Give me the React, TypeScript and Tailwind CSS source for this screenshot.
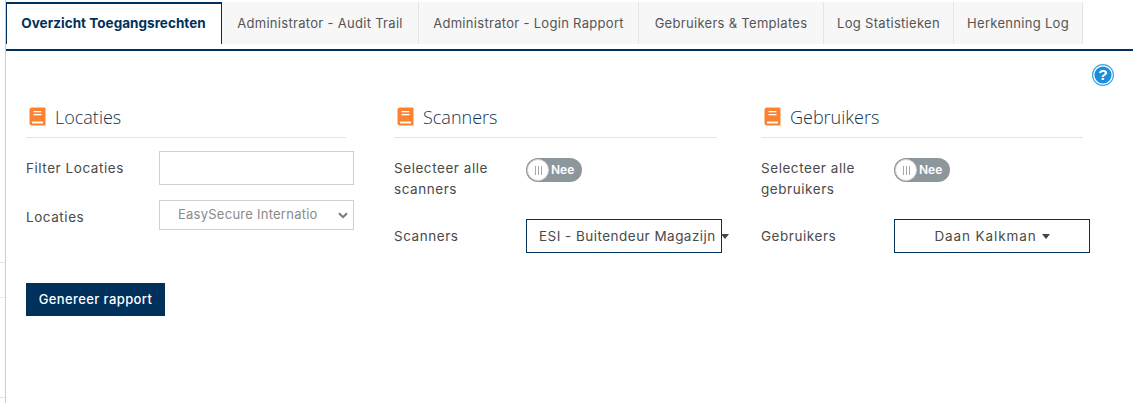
const poppinsLike = "font-['Inter','Liberation_Sans',sans-serif]";

function Book() {
  return (
    <svg width="17" height="19" viewBox="0 0 17 19" className="shrink-0">
      <path d="M3 0.5h12.5a1 1 0 0 1 1 1v17H3a2.5 2.5 0 0 1-2.5-2.5V3A2.5 2.5 0 0 1 3 .5z" fill="#fd8230" />
      <rect x="4.5" y="4" width="8" height="1.3" fill="#fff" />
      <rect x="4.5" y="7" width="8" height="1.3" fill="#fff" />
      <rect x="3" y="14.6" width="11" height="1.8" fill="#fff" />
    </svg>
  );
}

function Heading({ title, width }: { title: string; width: string }) {
  return (
    <div className={`flex h-[38px] items-start gap-[9px] border-b border-[#dee6ec] pl-[3px] pt-[7px] ${width}`}>
      <Book />
      <span className="font-['Open_Sans',sans-serif] text-[18px] font-light leading-[20px] text-[#16324f]">{title}</span>
    </div>
  );
}

function Toggle() {
  return (
    <div className="flex h-6 w-14 items-center rounded-full bg-[#8c969d] p-[1px]">
      <div className="flex h-[22px] w-[22px] items-center justify-center gap-[2px] rounded-full border border-[#d5d5d5] bg-white">
        <span className="h-[9px] w-[1px] bg-[#a8a8a8]" />
        <span className="h-[9px] w-[1px] bg-[#a8a8a8]" />
        <span className="h-[9px] w-[1px] bg-[#a8a8a8]" />
      </div>
      <span className="ml-[2px] text-[12px] font-semibold leading-none text-white">Nee</span>
    </div>
  );
}

function Caret() {
  return <span className="ml-[5px] inline-block h-0 w-0 shrink-0 border-x-[4.5px] border-t-[5px] border-x-transparent border-t-[#444]" />;
}

function Label({ children, className = "" }: { children: React.ReactNode; className?: string }) {
  return <div className={`shrink-0 text-[13.5px] leading-[21px] tracking-[0.55px] text-[#4a4a4a] ${className}`}>{children}</div>;
}

const tabs = [
  ["Administrator - Audit Trail", "w-[197px]"],
  ["Administrator - Login Rapport", "w-[220px]"],
  ["Gebruikers & Templates", "w-[185px]"],
  ["Log Statistieken", "w-[130px]"],
  ["Herkenning Log", "w-[129px]"],
];

export default function App() {
  return (
    <div className={`flex h-[403px] w-[1133px] overflow-hidden bg-white ${poppinsLike}`}>
      <div className="flex h-full w-[6px] shrink-0 flex-col border-r border-[#cfcfcf] pt-[262px]">
        <div className="h-px bg-[#e4e4e4]" />
        <div className="mt-[34px] h-px border-t border-dotted border-[#dddddd]" />
        <div className="mt-[99px] h-px bg-[#e4e4e4]" />
      </div>
      <div className="flex min-w-0 flex-1 flex-col">
        <div className="flex h-[51px] items-start border-b-2 border-[#00305c] pt-[2px]">
          <div className="flex h-[42px] w-[216px] items-center justify-center border-x border-t-2 border-[#00305c] bg-white pb-[1px] pr-[1px] text-[13.5px] font-bold tracking-[0.03px] text-[#00305c]">
            Overzicht Toegangsrechten
          </div>
          {tabs.map(([t, w]) => (
            <div key={t} className={`flex h-[42px] items-center justify-center border-r border-[#e5e5e5] bg-[#f7f7f7] pt-[1px] text-[13px] tracking-[0.3px] text-[#555] ${w}`}>
              {t}
            </div>
          ))}
        </div>
        <div className="relative flex-1">
          <svg width="24" height="24" viewBox="0 0 24 24" className="absolute left-[1085px] top-[12px]">
            <circle cx="12" cy="12" r="10.4" fill="#fff" stroke="#3ea6e6" strokeWidth="1.2" />
            <circle cx="12" cy="12" r="8.6" fill="#1b8ed8" />
            <text x="12" y="17.4" textAnchor="middle" fontSize="15.5" fontWeight="700" fill="#fff" fontFamily="Liberation Sans">?</text>
          </svg>
          <div className="grid grid-cols-[368px_367px_367px] pl-5 pt-[49px]">
            <section>
              <Heading title="Locaties" width="w-[320px]" />
              <div className="mt-[13px] flex items-center">
                <Label className="w-[133px] tracking-[0.35px]">Filter Locaties</Label>
                <div className="h-[34px] w-[195px] border border-[#d1d1d1] bg-white" />
              </div>
              <div className="mt-[15px] flex items-center">
                <Label className="w-[133px] pt-[4px]">Locaties</Label>
                <div className="flex h-[30px] w-[195px] items-center justify-between border border-[#d1d1d1] pl-[18px] pr-[5px] text-[13px] tracking-[0.25px] text-[#8a8a8a]">
                  <span className="whitespace-nowrap">EasySecure Internatio</span>
                  <svg width="10" height="7" viewBox="0 0 10 7"><path d="M1 1.2l4 4 4-4" fill="none" stroke="#777" strokeWidth="2" /></svg>
                </div>
              </div>
              <div className="mt-[53px] flex h-[33px] w-[139px] items-center justify-center bg-[#00305c] text-[13px] font-medium tracking-[0.4px] text-white">
                Genereer rapport
              </div>
            </section>
            <section>
              <Heading title="Scanners" width="w-[323px]" />
              <div className="mt-[20px] flex items-start">
                <Label className="h-[42px] w-[132px]">Selecteer alle scanners</Label>
                <Toggle />
              </div>
              <div className="mt-[19px] flex items-center">
                <Label className="w-[132px]">Scanners</Label>
                <div className="flex h-[34px] w-[196px] items-center whitespace-nowrap border border-[#00305c] pl-3 text-[13.5px] tracking-[0.47px] text-[#4a4a4a]">
                  ESI - Buitendeur Magazijn
                  <Caret />
                </div>
              </div>
            </section>
            <section>
              <Heading title="Gebruikers" width="w-[322px]" />
              <div className="mt-[20px] flex items-start">
                <Label className="h-[42px] w-[133px]">Selecteer alle gebruikers</Label>
                <Toggle />
              </div>
              <div className="mt-[19px] flex items-center">
                <Label className="w-[133px]">Gebruikers</Label>
                <div className="flex h-[34px] w-[196px] items-center justify-center whitespace-nowrap border border-[#00305c] text-[13.5px] tracking-[0.9px] text-[#4a4a4a]">
                  Daan Kalkman
                  <Caret />
                </div>
              </div>
            </section>
          </div>
        </div>
      </div>
    </div>
  );
}
